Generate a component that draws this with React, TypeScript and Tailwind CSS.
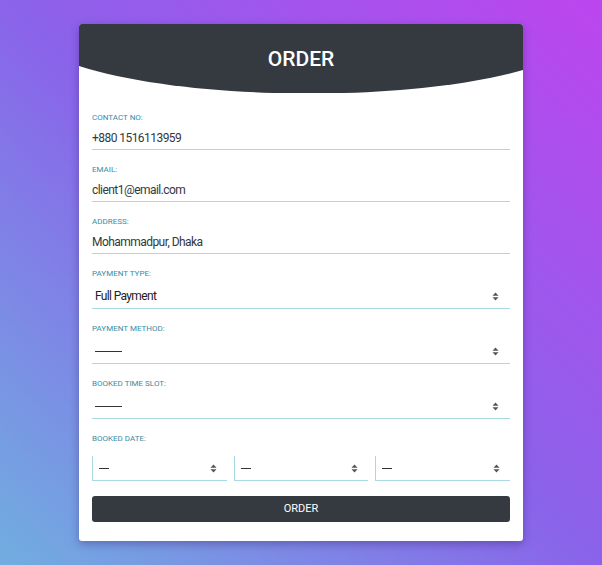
import React from "react";

const font = { fontFamily: "Roboto, 'Liberation Sans', sans-serif" };

function Arrows() {
  return (
    <svg width="7" height="9" viewBox="0 0 7 9" className="shrink-0">
      <path d="M3.5 0.5 L6.5 3.8 H0.5 Z" fill="#555" />
      <path d="M3.5 8.5 L6.5 5.2 H0.5 Z" fill="#555" />
    </svg>
  );
}

function Label({ children }: { children: React.ReactNode }) {
  return <div className="text-[8px] leading-[12px] uppercase text-[#3a8ca3]">{children}</div>;
}

function TextField({ label, value }: { label: string; value: string }) {
  return (
    <div className="flex flex-col">
      <Label>{label}</Label>
      <div className="mt-[6px] h-[20px] border-b border-[#a9d9e3] text-[12px] tracking-[-0.55px] leading-[16px] text-[#33383d]">
        {value}
      </div>
    </div>
  );
}

function SelectField({ label, value, dash }: { label: string; value: string; dash?: boolean }) {
  return (
    <div className="flex flex-col">
      <Label>{label}</Label>
      <div className="mt-[6px] h-[23px] border-b border-[#a9d9e3] flex items-center justify-between pl-[3px] pr-[11px] pb-[2px]">
        {dash ? (
          <span className="block w-[27px] h-px bg-[#333]" />
        ) : (
          <span className="text-[12px] tracking-[-0.65px] leading-[16px] text-[#222]">{value}</span>
        )}
        <Arrows />
      </div>
    </div>
  );
}

function DateSelect() {
  return (
    <div className="flex-1 h-[25px] border-l border-b border-[#a9d9e3] flex items-center justify-between pl-[6px] pr-[10px]">
      <span className="block w-[10px] h-px bg-[#333]" />
      <Arrows />
    </div>
  );
}

export default function App() {
  return (
    <div
      className="min-h-[565px] w-full pt-[24px] bg-[linear-gradient(to_top_right,#70aee0_0%,#8a63ea_50%,#bd45ef_100%)]"
      style={font}
    >
      <div className="w-[444px] mx-auto bg-white rounded-[3px] shadow-[0_3px_8px_rgba(40,20,90,0.35)] overflow-hidden">
        <div className="relative h-[69px]">
          <svg className="absolute inset-0" width="444" height="69" viewBox="0 0 444 69" preserveAspectRatio="none">
            <path d="M0 0 H444 V46 C330 78 114 78 0 42 Z" fill="#343a40" />
          </svg>
          <div className="relative pt-[21px] text-center text-[21px] leading-[28px] font-medium text-white">ORDER</div>
        </div>
        <div className="px-[13px] pt-[19px] pb-[19px] flex flex-col gap-[14px]">
          <TextField label="Contact No:" value="+880 1516113959" />
          <TextField label="Email:" value="client1@email.com" />
          <TextField label="Address:" value="Mohammadpur, Dhaka" />
          <SelectField label="Payment Type:" value="Full Payment" />
          <SelectField label="Payment Method:" value="" dash />
          <SelectField label="Booked Time Slot:" value="" dash />
          <div className="flex flex-col">
            <Label>Booked Date:</Label>
            <div className="mt-[11px] flex gap-[7px]">
              <DateSelect />
              <DateSelect />
              <DateSelect />
            </div>
          </div>
          <button className="mt-[1px] h-[26px] w-full rounded-[3px] bg-[#343a40] text-white text-[11px] leading-[26px]">
            ORDER
          </button>
        </div>
      </div>
    </div>
  );
}
